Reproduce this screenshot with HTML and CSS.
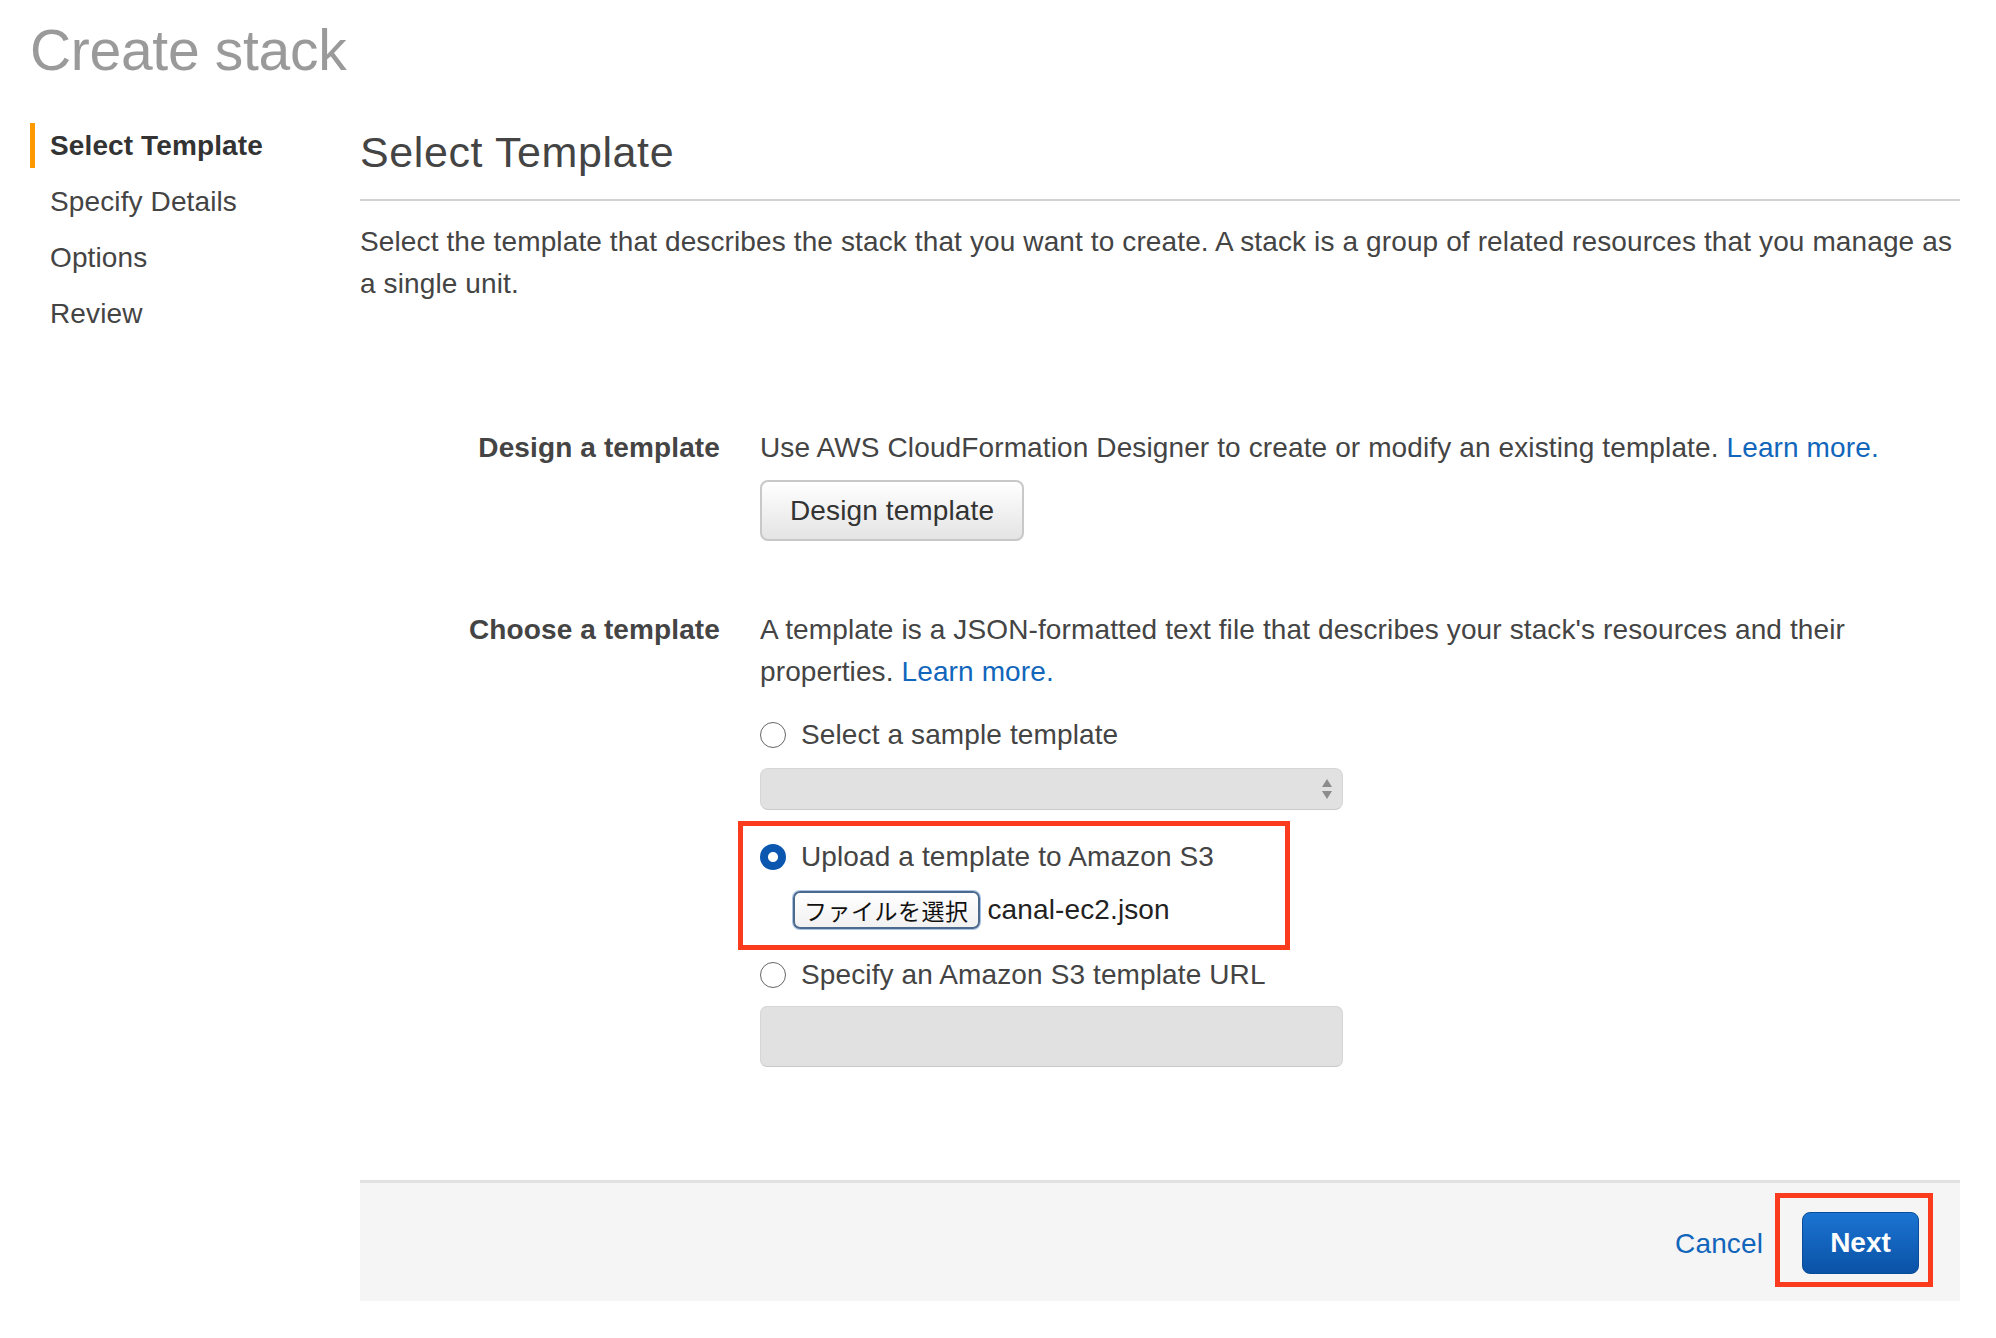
FILE: index.html
```html
<!DOCTYPE html>
<html lang="en">
<head>
<meta charset="utf-8">
<title>Create stack</title>
<link rel="stylesheet" href="styles.css">
</head>
<body>
<div class="page">
  <h1 class="page-title">Create stack</h1>
  <div class="layout">
    <nav class="steps">
      <ul class="step-list">
        <li class="step active">Select Template</li>
        <li class="step">Specify Details</li>
        <li class="step">Options</li>
        <li class="step">Review</li>
      </ul>
    </nav>
    <main class="content">
      <h2 class="section-title">Select Template</h2>
      <p class="intro">Select the template that describes the stack that you want to create. A stack is a group of related resources that you manage as a single unit.</p>

      <div class="form">
        <div class="row row-design">
          <div class="row-label">Design a template</div>
          <div class="row-value">
            <p class="help">Use AWS CloudFormation Designer to create or modify an existing template. <a class="link" href="#">Learn more.</a></p>
            <button class="btn" type="button">Design template</button>
          </div>
        </div>

        <div class="row row-choose">
          <div class="row-label">Choose a template</div>
          <div class="row-value">
            <p class="help">A template is a JSON-formatted text file that describes your stack's resources and their properties. <a class="link" href="#">Learn more.</a></p>

            <div class="option option-first"><span class="radio"></span><span>Select a sample template</span></div>
            <div class="select-box">
              <svg class="select-arrows" width="12" height="22" viewBox="0 0 12 22"><path d="M6 1 L11 9 L1 9 Z" fill="#8c8c8c"/><path d="M1 13 L11 13 L6 21 Z" fill="#8c8c8c"/></svg>
            </div>

            <div class="highlight">
              <div class="option"><span class="radio checked"></span><span>Upload a template to Amazon S3</span></div>
              <div class="file-row"><span class="file-btn">ファイルを選択</span><span class="file-name">canal-ec2.json</span></div>
            </div>

            <div class="option option-url"><span class="radio"></span><span>Specify an Amazon S3 template URL</span></div>
            <div class="text-input"></div>
          </div>
        </div>
      </div>

      <footer class="actions">
        <a class="cancel" href="#">Cancel</a>
        <span class="next-mark"><button class="btn-primary" type="button">Next</button></span>
      </footer>
    </main>
  </div>
</div>
</body>
</html>
```

FILE: styles.css
```css
html, body {
  margin: 0;
  padding: 0;
  background: #ffffff;
}

body {
  font-family: "Liberation Sans", Arial, Helvetica, sans-serif;
  font-size: 28px;
  color: #444444;
  letter-spacing: 0.12px;
}

.page {
  padding: 22px 36px 0 30px;
}

.page-title {
  margin: 0;
  font-size: 57px;
  line-height: 57px;
  font-weight: normal;
  color: #9a9a9a;
  letter-spacing: -0.3px;
}

.layout {
  display: flex;
  margin-top: 44px;
}

.steps {
  width: 330px;
  flex: none;
}

.step-list {
  list-style: none;
  margin: 0;
  padding: 0;
}

.step {
  line-height: 45px;
  margin-bottom: 11px;
  padding-left: 15px;
  border-left: 5px solid transparent;
  color: #444444;
}

.step.active {
  border-left-color: #ff9900;
  font-weight: bold;
  color: #333333;
}

.content {
  flex: 1;
  min-width: 0;
  padding-top: 3px;
}

.section-title {
  margin: 0;
  font-size: 43px;
  line-height: 52px;
  font-weight: normal;
  color: #444444;
  padding-bottom: 21px;
  border-bottom: 2px solid #d2d2d2;
  letter-spacing: 0.6px;
}

.intro {
  margin: 20px 0 0;
  line-height: 42px;
}

.form {
  padding-top: 122px;
}

.row {
  display: grid;
  grid-template-columns: 360px 1fr;
  column-gap: 40px;
}

.row-choose {
  margin-top: 68px;
}

.row-label {
  text-align: right;
  font-weight: bold;
  line-height: 42px;
  color: #444444;
}

.row-value {
  display: flex;
  flex-direction: column;
  align-items: flex-start;
}

.help {
  margin: 0;
  line-height: 42px;
}

.link {
  color: #1166bb;
  text-decoration: none;
}

.btn {
  display: block;
  margin-top: 11px;
  height: 61px;
  padding: 0 28px;
  font-family: inherit;
  font-size: 28px;
  line-height: 57px;
  letter-spacing: 0.12px;
  color: #333333;
  background: linear-gradient(#ffffff, #e4e4e4);
  border: 2px solid #c8c8c8;
  border-radius: 8px;
}

.option {
  display: flex;
  align-items: center;
  height: 42px;
  color: #444444;
}

.option-first {
  margin-top: 21px;
}

.option-url {
  margin-top: 4px;
}

.radio {
  width: 26px;
  height: 26px;
  box-sizing: border-box;
  border: 1.5px solid #666666;
  border-radius: 50%;
  background: #ffffff;
  margin-right: 15px;
  flex: none;
}

.radio.checked {
  border: none;
  background: radial-gradient(circle, #ffffff 0 4.5px, #0b57b0 5.5px);
}

.select-box {
  position: relative;
  margin-top: 12px;
  width: 583px;
  height: 42px;
  box-sizing: border-box;
  background: #e1e1e1;
  border: 1px solid #d6d6d6;
  border-bottom-color: #c9c9c9;
  border-radius: 8px;
}

.select-arrows {
  position: absolute;
  right: 9px;
  top: 9px;
}

.highlight {
  margin-top: 11px;
  margin-left: -22px;
  width: 552px;
  box-sizing: border-box;
  border: 5px solid #fb3b1e;
  padding: 10px 0 16px 17px;
}

.file-row {
  display: flex;
  align-items: center;
  margin-top: 13px;
  height: 38px;
  padding-left: 33px;
}

.file-btn {
  height: 38px;
  box-sizing: border-box;
  padding: 0 9px;
  display: flex;
  align-items: center;
  font-family: "Noto Sans CJK JP", "Liberation Sans", sans-serif;
  font-size: 23px;
  font-weight: 400;
  letter-spacing: 0.5px;
  color: #111111;
  background: linear-gradient(#ffffff, #f1f1f1);
  border: 2px solid #4d6a8e;
  border-radius: 7px;
  box-shadow: 0 0 0 1px #a9c3e3;
}

.file-name {
  margin-left: 8px;
  color: #222222;
}

.text-input {
  margin-top: 10px;
  width: 583px;
  height: 61px;
  box-sizing: border-box;
  background: #e1e1e1;
  border: 1px solid #d6d6d6;
  border-bottom-color: #c9c9c9;
  border-radius: 7px;
}

.actions {
  margin-top: 113px;
  display: flex;
  justify-content: flex-end;
  align-items: center;
  background: #f5f5f5;
  border-top: 3px solid #e1e1e1;
  padding: 10px 27px 14px 0;
}

.cancel {
  color: #1166bb;
  text-decoration: none;
  margin-right: 12px;
  margin-top: 8px;
}

.next-mark {
  display: flex;
  border: 5px solid #fb3b1e;
  padding: 14px 9px 8px 22px;
}

.btn-primary {
  height: 62px;
  width: 117px;
  padding: 0;
  font-family: inherit;
  font-size: 28px;
  font-weight: bold;
  color: #ffffff;
  background: linear-gradient(#1b74d2, #0a52a6);
  border: 1px solid #0a4c97;
  border-radius: 8px;
}
```
